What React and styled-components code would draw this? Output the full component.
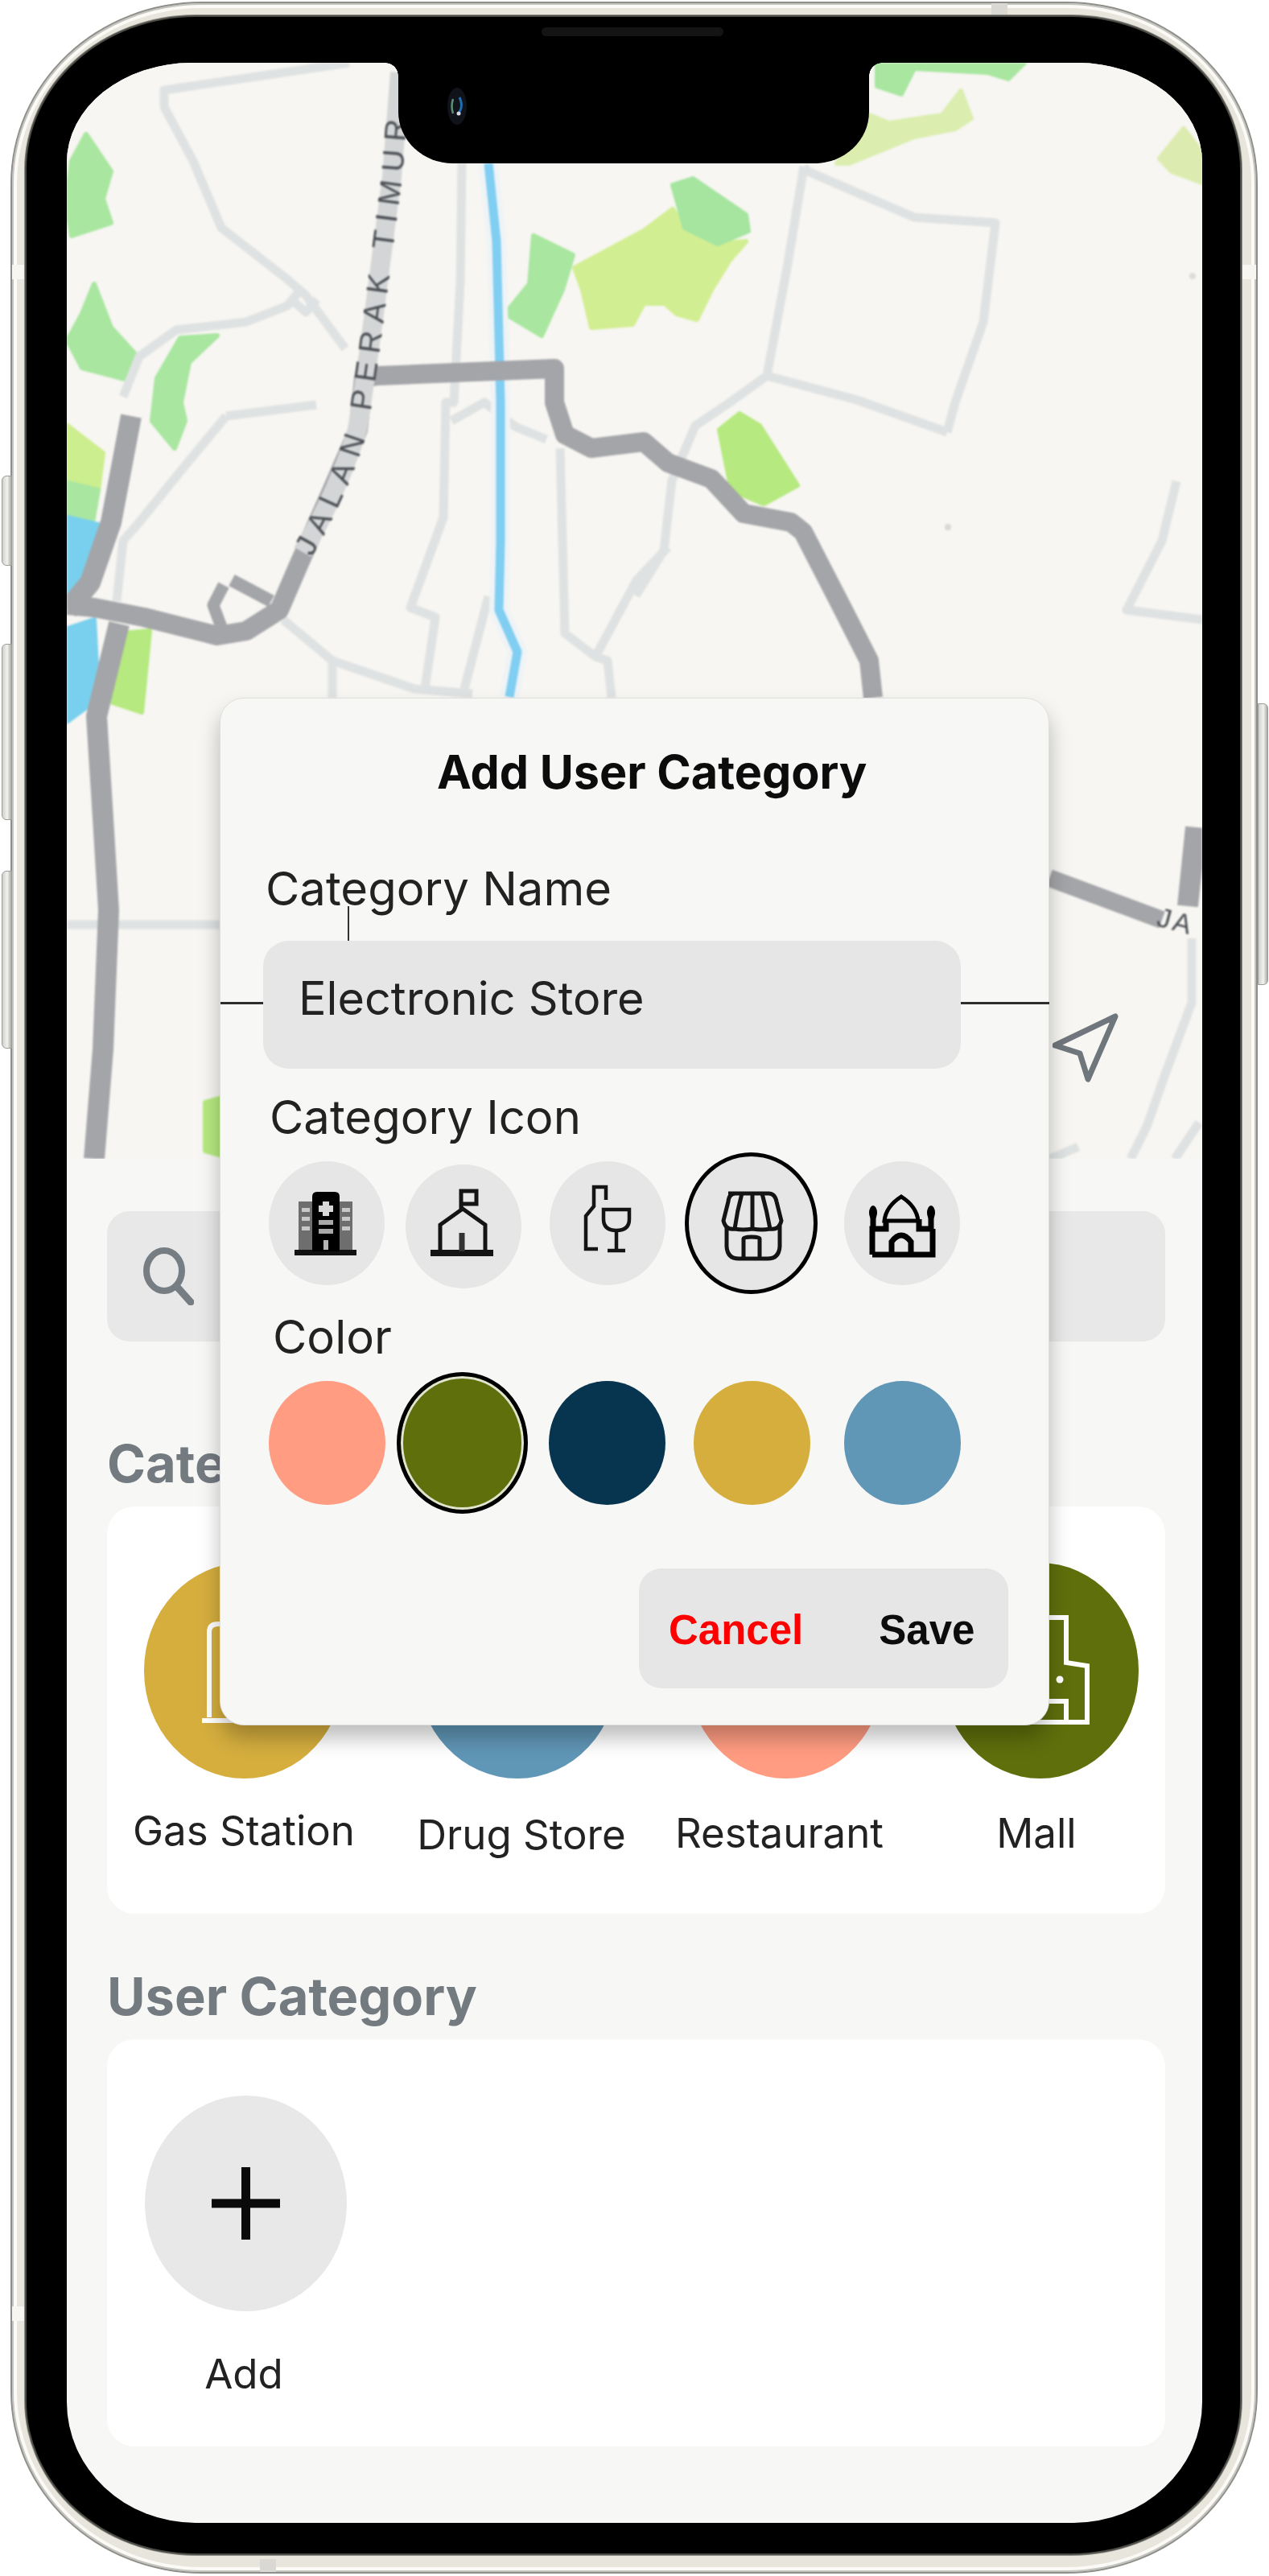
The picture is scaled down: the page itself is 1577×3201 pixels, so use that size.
import React from 'react';
import styled, { createGlobalStyle } from 'styled-components';
import { Pill, Utensils } from 'lucide-react';

const GlobalStyle = createGlobalStyle`
    html, body {
        margin: 0;
        padding: 0;
        background: #ffffff;
    }

    * {
        box-sizing: border-box;
    }

    #root {
        width: 1577px;
        height: 3201px;
        overflow: hidden;
        font-family: Inter, "Liberation Sans", sans-serif;
    }
`;

const Page = styled.div`
    width: 1577px;
    height: 3201px;
    padding: 2px 14px 0 13px;
`;

const Body = styled.div`
    position: relative;
    width: 1550px;
    height: 3196px;
    padding: 17px 20px 23px 18px;
    border: 2px solid #8e8e8a;
    border-radius: 238px / 226px;
    background: #e8e5dc;
    box-shadow: inset 0 0 0 2px #c4c4bf, inset 0 0 0 6px #fbfaf6;
`;

const SideButton = styled.div`
    position: absolute;
    top: ${(p) => p.$top}px;
    ${(p) => (p.$right ? 'right: -15px;' : 'left: -13px;')}
    width: 13px;
    height: ${(p) => p.$height}px;
    border: 1px solid #9c9c98;
    border-radius: ${(p) => (p.$right ? '0 6px 6px 0' : '6px 0 0 6px')};
    background: linear-gradient(90deg, #cfcfcb, #f2f2ee 55%, #a9a9a5);
`;

const Band = styled.div`
    position: absolute;
    top: ${(p) => p.$top}px;
    ${(p) => (p.$right ? 'right: 0;' : 'left: 0;')}
    width: 17px;
    height: 18px;
    background: #f7f6f1;
`;

const FlatBand = styled.div`
    position: absolute;
    ${(p) => (p.$bottom ? 'bottom: 0;' : 'top: 0;')}
    left: ${(p) => p.$left}px;
    width: 20px;
    height: 16px;
    background: #d9d8d2;
`;

const Bezel = styled.div`
    position: relative;
    width: 100%;
    height: 100%;
    padding: 57px 46px 39px 50px;
    border-radius: 210px / 190px;
    background: #000000;
    box-shadow: 0 0 0 2px #4d4d48, 0 0 0 3px #8f8f89;
`;

const Speaker = styled.div`
    position: absolute;
    top: 13px;
    left: 640px;
    width: 226px;
    height: 11px;
    border-radius: 6px;
    background: #141414;
`;

const Screen = styled.div`
    position: relative;
    display: flex;
    flex-direction: column;
    width: 1411px;
    height: 3057px;
    overflow: hidden;
    border-radius: 155px 155px 160px 160px / 124px 124px 150px 150px;
    background: #f7f7f5;
`;

const Notch = styled.div`
    position: absolute;
    top: 0;
    left: 412px;
    width: 585px;
    height: 125px;
    border-radius: 0 0 68px 68px / 0 0 64px 64px;
    background: #000000;

    &::before,
    &::after {
        content: '';
        position: absolute;
        top: 0;
        width: 16px;
        height: 16px;
    }

    &::before {
        left: -16px;
        background: radial-gradient(circle at 0 100%, transparent 15.5px, #000000 16px);
    }

    &::after {
        right: -16px;
        background: radial-gradient(circle at 100% 100%, transparent 15.5px, #000000 16px);
    }
`;

const Camera = styled.svg`
    position: absolute;
    top: 31px;
    left: 61px;
    width: 24px;
    height: 46px;
`;

const MapArea = styled.div`
    flex: none;
    height: 1362px;
    overflow: hidden;
    background: #f7f6f2;
`;

const MapSvg = styled.svg`
    display: block;
    width: 1411px;
    height: 1362px;
    filter: blur(1.3px);
`;

const Road = styled.path`
    fill: none;
    stroke: ${(p) => p.$color || '#dfe2e2'};
    stroke-width: ${(p) => p.$w || 11}px;
    stroke-linejoin: round;
    stroke-linecap: butt;
`;

const Area = styled.polygon`
    fill: ${(p) => p.$color};
    stroke: ${(p) => p.$color};
    stroke-width: 6px;
    stroke-linejoin: round;
`;

const MapLabel = styled.text`
    font-family: "Liberation Sans", Arial, sans-serif;
    font-size: ${(p) => p.$size || 38}px;
    fill: #4c5055;
    letter-spacing: ${(p) => p.$spacing || 10.5}px;
`;

const Sheet = styled.div`
    flex: 1;
    padding: 65px 46px 0 50px;
    filter: blur(0.4px);
`;

const SearchBar = styled.div`
    display: flex;
    align-items: center;
    height: 162px;
    padding-left: 44px;
    border-radius: 28px;
    background: #e8e8e8;
`;

const SearchIcon = styled.svg`
    display: block;
    width: 64px;
    height: 72px;
`;

const Heading = styled.h2`
    margin: ${(p) => p.$top}px 0 16px 0;
    font-size: 65px;
    line-height: 75px;
    font-weight: 700;
    color: #737a80;
`;

const Card = styled.div`
    display: grid;
    grid-template-columns: 340px 350px 291px 348px;
    height: 506px;
    padding-top: 70px;
    border-radius: 34px;
    background: #ffffff;
`;

const Item = styled.div`
    display: flex;
    flex-direction: column;
    align-items: center;
`;

const Circle = styled.div`
    display: flex;
    flex: none;
    align-items: center;
    justify-content: center;
    width: ${(p) => p.$w || 245}px;
    height: 268px;
    margin-left: ${(p) => p.$nudge || 0}px;
    border-radius: 50%;
    background: ${(p) => p.$color};
    color: #ffffff;
`;

const ItemLabel = styled.div`
    margin-top: ${(p) => p.$top || 35}px;
    font-size: 51px;
    line-height: 60px;
    color: #222222;
    white-space: nowrap;
`;

const Modal = styled.div`
    position: absolute;
    top: 789px;
    left: 190px;
    display: flex;
    flex-direction: column;
    width: 1031px;
    height: 1277px;
    padding: 58px 0 0 53px;
    border: 1px solid #dededc;
    border-radius: 30px;
    background: #f7f7f5;
    box-shadow: 0 16px 26px rgba(0, 0, 0, 0.26);
    filter: blur(0.4px);
`;

const Title = styled.h1`
    margin: 0 0 0 216px;
    font-size: 57.5px;
    line-height: 66px;
    font-weight: 700;
    color: #0c0c0c;
    white-space: nowrap;
`;

const Label = styled.div`
    margin: ${(p) => p.$top}px 0 0 ${(p) => p.$left}px;
    font-size: 58px;
    line-height: 72px;
    color: #222222;
    white-space: nowrap;
`;

const NameInput = styled.div`
    position: relative;
    display: flex;
    align-items: center;
    width: 867px;
    height: 159px;
    margin-top: 29px;
    padding: 0 0 17px 44px;
    border-radius: 32px;
    background: #e6e6e6;
    font-size: 57.5px;
    color: #222222;

    &::before,
    &::after {
        content: '';
        position: absolute;
        top: 76px;
        height: 3px;
        background: #2e2e2e;
    }

    &::before {
        left: -53px;
        width: 53px;
    }

    &::after {
        left: 867px;
        width: 110px;
    }
`;

const Caret = styled.div`
    position: absolute;
    top: -43px;
    left: 105px;
    width: 2px;
    height: 43px;
    background: #333333;
`;

const PickRow = styled.div`
    display: grid;
    grid-template-columns: ${(p) => p.$cols};
    align-items: center;
    height: 176px;
    margin: ${(p) => p.$top}px 0 0 7px;
`;

const IconCircle = styled.div`
    display: flex;
    align-items: center;
    justify-content: center;
    width: ${(p) => (p.$on ? 165 : 144)}px;
    height: ${(p) => (p.$on ? 176 : 154)}px;
    margin-top: ${(p) => p.$down || 0}px;
    border: ${(p) => (p.$on ? '5px solid #000000' : 'none')};
    border-radius: 50%;
    background: #e6e6e6;
`;

const Glyph = styled.svg`
    display: block;
    width: 144px;
    height: 154px;
    flex: none;
`;

const Swatch = styled.div`
    width: ${(p) => (p.$on ? 163 : 145)}px;
    height: ${(p) => (p.$on ? 176 : 154)}px;
    border: ${(p) => (p.$on ? '5px solid #000000' : 'none')};
    border-radius: 50%;
    background: ${(p) => p.$color};
    box-shadow: ${(p) => (p.$on ? 'inset 0 0 0 3px #dfe4cf' : 'none')};
`;

const Actions = styled.div`
    display: flex;
    align-items: center;
    align-self: flex-end;
    width: 459px;
    height: 149px;
    margin: 68px 50px 0 0;
    padding: 0 0 0 37px;
    border-radius: 28px;
    background: #e6e6e6;
`;

const ActionButton = styled.div`
    margin-right: 94px;
    padding-top: 4px;
    font-family: "Liberation Sans", Arial, sans-serif;
    font-size: 51px;
    font-weight: 700;
    color: ${(p) => p.$color};
`;

const NavArrow = styled.svg`
    position: absolute;
    top: 1181px;
    left: 1225px;
    width: 82px;
    height: 86px;
`;

const CategoryGlyph = styled.svg`
    display: block;
    width: 245px;
    height: 268px;
`;

const lightRoads = [
    'M434 78 L204 112 L204 133 L240 200 L275 283 L357 347 L380 367 L429 433',
    'M372 362 L357 380 L306 400 L219 410 L173 443 L153 493',
    'M394 372 L380 388 L362 372',
    'M574 203 L572 350 L564 500 L554 500 L551 643 L510 755 L541 767 L528 856',
    'M999 207 L978 333 L953 467 L907 500 L864 529 L835 597 L825 684 L790 740',
    'M999 207 L1004 213 L1136 270 L1237 277 L1222 400 L1187 500 L1177 537',
    'M953 467 L1065 497 L1177 537',
    'M696 557 L702 787 L740 816 L791 721 L830 680',
    'M740 816 L755 821 L760 867',
    'M607 741 L577 856',
    'M561 523 L602 500 L640 530 L679 546',
    'M352 770 L413 821 L515 856 L587 862',
    'M413 821 L413 867',
    'M281 517 L393 503',
    'M281 517 L224 586 L173 649 L153 672 L145 747',
    'M1462 598 L1444 672 L1400 758 L1494 770',
    'M84 1149 L273 1149',
    'M1481 1166 L1481 1246 L1449 1332 L1425 1400 L1405 1440',
    'M1305 1440 L1340 1425',
    'M1460 1440 L1490 1395',
];

const darkRoads = [
    'M84 752 L117 755 L179 767 L270 790 L306 784 L347 758 L372 700 L412 610 L445 534 L452 470 L469 467 L689 458 L689 500 L702 540 L735 557 L800 549 L830 575 L884 595 L924 638 L983 649 L998 661 L1048 758 L1080 821 L1085 867',
    'M163 517 L138 649 L112 724 L84 758',
    'M148 775 L120 890 L128 1017 L135 1131 L128 1304 L117 1440',
    'M1304 1091 L1444 1143',
    'M1486 1028 L1476 1126',
];

export default function App() {
    return (
        <Page>
            <GlobalStyle />
            <Body>
                <SideButton $top={587} $height={112} />
                <SideButton $top={796} $height={219} />
                <SideButton $top={1078} $height={221} />
                <SideButton $right $top={870} $height={350} />
                <Band $top={325} />
                <Band $right $top={325} />
                <Band $top={2862} />
                <FlatBand $left={1217} />
                <FlatBand $bottom $left={308} />
                <Bezel>
                    <Speaker />
                    <Screen>
                        <MapArea>
                            <MapSvg viewBox="83 78 1411 1362">
                                <Area $color="#a9e6a0" points="89,200 107,167 138,213 128,247 138,277 89,293 83,250" />
                                <Area $color="#a9e6a0" points="117,353 138,407 168,440 163,473 102,457 84,423 102,390" />
                                <Area $color="#a9e6a0" points="224,420 270,417 235,450 225,500 230,523 217,557 189,523 195,470" />
                                <Area $color="#cdee8e" points="84,529 128,563 122,609 84,600" />
                                <Area $color="#a9e6a0" points="84,600 122,609 115,649 84,643" />
                                <Area $color="#b6e97f" points="153,787 186,784 176,885 140,873" />
                                <Area $color="#79d0ee" points="84,643 122,652 102,724 84,741" />
                                <Area $color="#79d0ee" points="84,781 117,770 120,827 107,879 84,896" />
                                <Area $color="#d2ee92" points="800,287 714,333 724,360 735,407 786,403 800,377 826,377 841,390 866,397 884,360 907,323 927,300 892,303 851,283 836,260" />
                                <Area $color="#a9e6a0" points="663,293 712,317 699,360 673,417 628,390 658,353" />
                                <Area $color="#a5e5a0" points="836,230 861,222 927,267 930,287 892,303 851,283" />
                                <Area $color="#a9e6a0" points="1090,78 1273,78 1253,98 1227,90 1136,85 1120,117 1090,107" />
                                <Area $color="#dbeeb0" points="1080,143 1105,153 1171,143 1194,113 1207,147 1187,160 1136,170 1055,203 1040,203" />
                                <Area $color="#dcecb0" points="1471,160 1441,197 1456,213 1494,227 1494,190" />
                                <Area $color="#b6e97f" points="894,534 919,514 944,529 991,603 949,626 909,609" />
                                <Area $color="#b6e97f" points="255,1370 273,1365 273,1435 255,1430" />
                                {lightRoads.map((d) => (
                                    <Road key={d} d={d} />
                                ))}
                                <Road d="M607 203 L617 300 L622 500 L622 672 L620 758 L643 810 L633 866" $color="#eef3f6" $w={24} />
                                <Road d="M607 203 L617 300 L622 500 L622 672 L620 758 L643 810 L633 866" $color="#80cef2" $w={11} />
                                <Road d={darkRoads[0]} $color="#a4a5a9" $w={24} />
                                <Road d="M278 727 L265 752 L278 787" $color="#a4a5a9" $w={15} />
                                <Road d="M288 721 L337 747" $color="#a4a5a9" $w={16} />
                                <Road d={darkRoads[1]} $color="#a4a5a9" $w={26} />
                                <Road d={darkRoads[2]} $color="#a4a5a9" $w={26} />
                                <Road d={darkRoads[3]} $color="#a4a5a9" $w={22} />
                                <Road d={darkRoads[4]} $color="#a4a5a9" $w={26} />
                                <path id="jalan" d="M376 686 Q420 610 444 534 Q456 460 470 350 L487 220 L497 90" fill="none" stroke="#d3d5d6" strokeWidth="24" />
                                <MapLabel dy="13">
                                    <textPath href="#jalan">JALAN PERAK TIMUR</textPath>
                                </MapLabel>
                                <MapLabel $size={34} $spacing={3} transform="translate(1436 1150) rotate(15)">JA</MapLabel>
                                <circle cx="1178" cy="655" r="4" fill="#d8d8d6" />
                                <circle cx="1482" cy="343" r="4" fill="#dcdcda" />
                            </MapSvg>
                        </MapArea>
                        <Sheet>
                            <SearchBar>
                                <SearchIcon viewBox="0 0 64 72">
                                    <ellipse cx="27" cy="29" rx="22" ry="25" fill="none" stroke="#767d83" strokeWidth="8" />
                                    <line x1="43" y1="49" x2="60" y2="68" stroke="#767d83" strokeWidth="9" strokeLinecap="round" />
                                </SearchIcon>
                            </SearchBar>
                            <Heading $top={114}>Category</Heading>
                            <Card>
                                <Item>
                                    <Circle $color="#d5ae3e" $w={249}>
                                        <CategoryGlyph viewBox="0 0 245 268" fill="none" stroke="#ffffff" strokeWidth="6">
                                            <path d="M79 192 L79 86 Q79 76 90 76 L150 76 Q160 76 160 86 L160 192" />
                                            <path d="M70 196 L170 196" />
                                        </CategoryGlyph>
                                    </Circle>
                                    <ItemLabel $top={35}>Gas Station</ItemLabel>
                                </Item>
                                <Item>
                                    <Circle $color="#6096b6" $w={250} $nudge={-10}>
                                        <Pill size={110} />
                                    </Circle>
                                    <ItemLabel $top={40}>Drug Store</ItemLabel>
                                </Item>
                                <Item>
                                    <Circle $color="#ff9c82" $w={245} $nudge={15}>
                                        <Utensils size={110} />
                                    </Circle>
                                    <ItemLabel $top={38}>Restaurant</ItemLabel>
                                </Item>
                                <Item>
                                    <Circle $color="#5f6f0c" $w={245} $nudge={8}>
                                        <CategoryGlyph viewBox="0 0 245 268" fill="none" stroke="#ffffff" strokeWidth="6">
                                            <path d="M60 198 L60 68 L155 68 L155 124 L181 128 L181 198 Z" />
                                            <path d="M134 172 L155 172 L155 195" />
                                            <circle cx="147" cy="145" r="4.5" fill="#ffffff" stroke="none" />
                                        </CategoryGlyph>
                                    </Circle>
                                    <ItemLabel $top={38}>Mall</ItemLabel>
                                </Item>
                            </Card>
                            <Heading $top={65}>User Category</Heading>
                            <Card>
                                <Item>
                                    <Circle $color="#e8e8e8" $w={251} $nudge={5}>
                                        <svg width="85" height="90" viewBox="0 0 85 90">
                                            <path d="M0 45 L85 45 M42.5 0 L42.5 90" stroke="#0a0a0a" strokeWidth="11" />
                                        </svg>
                                    </Circle>
                                    <ItemLabel $top={48}>Add</ItemLabel>
                                </Item>
                            </Card>
                        </Sheet>
                        <Notch>
                            <Camera viewBox="0 0 24 46">
                                <ellipse cx="12" cy="23" rx="12" ry="23" fill="#10141a" />
                                <path d="M7 14 Q4 23 7 32" stroke="#5d8f78" strokeWidth="2.5" fill="none" />
                                <path d="M15 12 Q20 22 15 30" stroke="#1f6fb5" strokeWidth="3" fill="none" />
                                <circle cx="14" cy="32" r="2.5" fill="#d8d8e8" />
                            </Camera>
                        </Notch>
                        <NavArrow viewBox="0 0 82 86">
                            <polygon points="3,40 78,4 44,82 34,50" fill="none" stroke="#6f767c" strokeWidth="7" strokeLinejoin="round" />
                        </NavArrow>
                        <Modal>
                            <Title>Add User Category</Title>
                            <Label $top={76} $left={3}>Category Name</Label>
                            <NameInput>
                                <Caret />
                                Electronic Store
                            </NameInput>
                            <Label $top={24} $left={8}>Category Icon</Label>
                            <PickRow $top={8} $cols="170px 179px 168px 198px 144px">
                                <IconCircle>
                                    <Glyph viewBox="0 0 144 154">
                                        <rect x="37" y="50" width="67" height="63" fill="#6e6e6e" />
                                        <rect x="32" y="110" width="77" height="7" fill="#111111" />
                                        <path d="M54 112 L54 44 Q54 38 60 38 L82 38 Q88 38 88 44 L88 112 Z" fill="#000000" />
                                        <path d="M67 50 L75 50 L75 55 L80 55 L80 63 L75 63 L75 68 L67 68 L67 63 L62 63 L62 55 L67 55 Z" fill="#d8d8d8" />
                                        <rect x="62" y="73" width="18" height="6" fill="#a8a8a8" />
                                        <rect x="62" y="84" width="18" height="6" fill="#a8a8a8" />
                                        <rect x="68" y="98" width="6" height="12" fill="#b5b5b5" />
                                        <rect x="41" y="58" width="10" height="5" fill="#c8c8c8" />
                                        <rect x="41" y="69" width="10" height="5" fill="#c8c8c8" />
                                        <rect x="41" y="81" width="10" height="5" fill="#c8c8c8" />
                                        <rect x="91" y="58" width="10" height="5" fill="#c8c8c8" />
                                        <rect x="91" y="69" width="10" height="5" fill="#c8c8c8" />
                                        <rect x="91" y="81" width="10" height="5" fill="#c8c8c8" />
                                    </Glyph>
                                </IconCircle>
                                <IconCircle $down={8}>
                                    <Glyph viewBox="0 0 144 154" fill="none" stroke="#141414" strokeWidth="5">
                                        <path d="M31 110 L109 110" strokeWidth="8" />
                                        <path d="M43 108 L43 75 L71 55 L99 75 L99 108" />
                                        <path d="M70 85 L70 108" strokeWidth="7" stroke="#333333" />
                                        <path d="M69 55 L69 33 L88 33 L88 49 L69 49" />
                                    </Glyph>
                                </IconCircle>
                                <IconCircle>
                                    <Glyph viewBox="0 0 144 154" fill="none" stroke="#141414" strokeWidth="4.5">
                                        <path d="M60 109 L45 109 L45 68 L55 56 L55 32 L70 32 L70 48" />
                                        <path d="M67 60 L99 60 L99 72 Q99 86 83 86 Q67 86 67 72 Z" />
                                        <path d="M83 86 L83 110 M72 111 L94 111" />
                                    </Glyph>
                                </IconCircle>
                                <IconCircle $on>
                                    <Glyph viewBox="0 0 144 154" fill="none" stroke="#141414" strokeWidth="5">
                                        <path d="M43 40 L93 40 Q101 40 103 50 L109 74 Q106 86 95 84 Q85 86 73 84 Q61 86 51 84 Q40 86 37 74 L43 50 Q44 40 52 40" />
                                        <path d="M60 40 Q54 62 51 84 M85 40 Q91 62 95 84 M73 40 L73 84" />
                                        <path d="M41 80 L41 106 Q42 121 56 121 L92 121 Q106 121 107 106 L107 80" />
                                        <path d="M62 121 L62 96 Q62 94 72 94 Q82 94 82 96 L82 121" />
                                    </Glyph>
                                </IconCircle>
                                <IconCircle>
                                    <Glyph viewBox="0 0 144 154" fill="none" stroke="#000000" strokeWidth="7">
                                        <path d="M35 116 L110 116 L110 84 M35 116 L35 84 L52 84 L52 72 M93 72 L93 84 L110 84" />
                                        <path d="M59 116 L59 100 Q71 84 83 100 L83 116" />
                                        <path d="M71 44 Q90 56 92 74 L50 74 Q52 56 71 44 Z" strokeWidth="5" />
                                        <path d="M36 84 L36 62 M108 84 L108 62" />
                                        <ellipse cx="36" cy="64" rx="5" ry="9" fill="#000000" stroke="none" />
                                        <ellipse cx="108" cy="64" rx="5" ry="9" fill="#000000" stroke="none" />
                                    </Glyph>
                                </IconCircle>
                            </PickRow>
                            <Label $top={17} $left={12}>Color</Label>
                            <PickRow $top={8} $cols="159px 189px 180px 187px 144px">
                                <Swatch $color="#ff9c82" />
                                <Swatch $color="#5f6f0c" $on />
                                <Swatch $color="#07354f" />
                                <Swatch $color="#d5ae3e" />
                                <Swatch $color="#6096b6" />
                            </PickRow>
                            <Actions>
                                <ActionButton $color="#ff0000">Cancel</ActionButton>
                                <ActionButton $color="#0c0c0c">Save</ActionButton>
                            </Actions>
                        </Modal>
                    </Screen>
                </Bezel>
            </Body>
        </Page>
    );
}
